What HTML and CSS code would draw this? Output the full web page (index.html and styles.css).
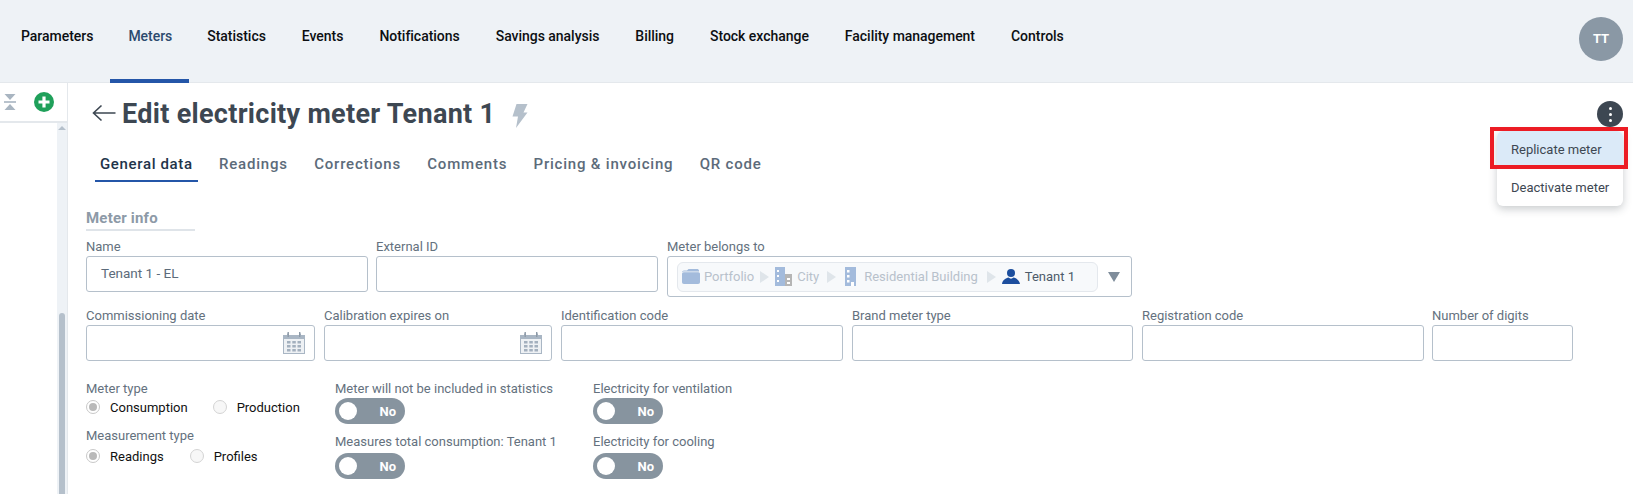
FILE: index.html
```html
<!DOCTYPE html>
<html lang="en">

<head>
    <meta charset="UTF-8">
    <meta name="viewport" content="width=device-width, initial-scale=1.0">
    <title>Edit electricity meter</title>
    <link rel="stylesheet" href="styles.css">
</head>

<body>

    <header class="topbar">
        <nav class="mainnav">
            <a href="#">Parameters</a>
            <a href="#" class="active">Meters</a>
            <a href="#">Statistics</a>
            <a href="#">Events</a>
            <a href="#">Notifications</a>
            <a href="#">Savings analysis</a>
            <a href="#">Billing</a>
            <a href="#">Stock exchange</a>
            <a href="#">Facility management</a>
            <a href="#">Controls</a>
        </nav>
        <div class="avatar">TT</div>
    </header>

    <div class="main">
        <aside class="sidebar">
            <div class="sidebar-head">
                <svg class="collapse-icon" width="12" height="16" viewBox="0 0 12 16">
                    <path d="M0.5 0H11.5L6 6Z" />
                    <rect x="0" y="7.2" width="12" height="1.6" />
                    <path d="M6 10L11.5 16H0.5Z" />
                </svg>
                <svg width="20" height="20" viewBox="0 0 20 20">
                    <circle cx="10" cy="10" r="10" fill="#1fa05a" />
                    <path d="M10 4.5V15.5M4.5 10H15.5" stroke="#fff" stroke-width="3.2" />
                </svg>
            </div>
            <div class="sidebar-body">
                <div class="scroll-track">
                    <span class="scroll-up"></span>
                    <span class="scroll-thumb"></span>
                </div>
            </div>
        </aside>

        <main class="content">
            <div class="page-head">
                <svg class="back" width="24" height="18" viewBox="0 0 24 18">
                    <path d="M23.5 9H1.5M9.5 1.5L1.5 9L9.5 16.5" fill="none" stroke="#3d4752" stroke-width="1.6" />
                </svg>
                <h1>Edit electricity meter Tenant 1</h1>
                <svg class="bolt" width="16" height="24" viewBox="0 0 16 24">
                    <path d="M4.5 0H15.5L11.5 8.5H15.5L4 24L6 12.5H0.5Z" fill="#b5c0cb" />
                </svg>
                <button class="more"><i></i><i></i><i></i></button>
            </div>

            <div class="tabs">
                <a href="#" class="active">General data</a>
                <a href="#">Readings</a>
                <a href="#">Corrections</a>
                <a href="#">Comments</a>
                <a href="#">Pricing &amp; invoicing</a>
                <a href="#">QR code</a>
            </div>

            <form class="form">
                <div class="section-title">Meter info</div>

                <div class="row row-first">
                    <div class="field w282">
                        <label>Name</label>
                        <div class="input">Tenant 1 - EL</div>
                    </div>
                    <div class="field w282">
                        <label>External ID</label>
                        <div class="input"></div>
                    </div>
                    <div class="field w465">
                        <label>Meter belongs to</label>
                        <div class="input tree-input">
                            <div class="crumbs">
                                <svg width="18" height="15" viewBox="0 0 18 15">
                                    <path d="M0 3.5C0 2.5 .7 1.5 2 1.5H5L6.5 0H15C16 0 17 .7 17 1.5V2.5H1.500C1 2.500 .5 3 0 3.500Z" fill="#a3bbdc" />
                                    <path d="M0 5C0 4 .7 3.3 1.700 3.300H16.300C17.300 3.300 18 4 18 5V13C18 14 17.300 15 16 15H2C.7 15 0 14 0 13Z" fill="#a3bbdc" />
                                </svg>
                                <span class="crumb portfolio">Portfolio</span>
                                <b class="sep"></b>
                                <svg width="17" height="19" viewBox="0 0 17 19">
                                    <rect x="0" y="0" width="10" height="19" fill="#a3bbdc" />
                                    <rect x="10" y="7" width="7" height="12" fill="#b5b5b5" />
                                    <path d="M2 3H4V5H2ZM2 8H4V10H2ZM2 13H4V15H2ZM12 11H15V13H12ZM12 15H15V17H12Z" fill="#fff" />
                                </svg>
                                <span class="crumb city">City</span>
                                <b class="sep sep-wide"></b>
                                <svg width="11" height="19" viewBox="0 0 11 19">
                                    <rect x="0" y="0" width="11" height="19" fill="#a3bbdc" />
                                    <path d="M2 3H4.500V5.500H2ZM2 8H4.500V10.500H2ZM2 13H4.500V15.500H2ZM6 15H9V19H6Z" fill="#fff" />
                                </svg>
                                <span class="crumb building">Residential Building</span>
                                <b class="sep"></b>
                                <svg width="18" height="15" viewBox="0 0 18 15">
                                    <circle cx="9" cy="4" r="4" fill="#1c4e9e" />
                                    <path d="M0 15C.5 11 4 9 6.500 8.500C8 10 10 10 11.500 8.500C14 9 17.500 11 18 15Z" fill="#1c4e9e" />
                                </svg>
                                <span class="crumb current">Tenant 1</span>
                            </div>
                            <span class="caret"></span>
                        </div>
                    </div>
                </div>

                <div class="row row-second">
                    <div class="field w229">
                        <label>Commissioning date</label>
                        <div class="input date-input">
                            <svg width="22" height="22" viewBox="0 0 22 22">
                                <use href="#cal" />
                            </svg>
                        </div>
                    </div>
                    <div class="field w228">
                        <label>Calibration expires on</label>
                        <div class="input date-input">
                            <svg width="22" height="22" viewBox="0 0 22 22">
                                <use href="#cal" />
                            </svg>
                        </div>
                    </div>
                    <div class="field w282">
                        <label>Identification code</label>
                        <div class="input"></div>
                    </div>
                    <div class="field w281">
                        <label>Brand meter type</label>
                        <div class="input"></div>
                    </div>
                    <div class="field w282">
                        <label>Registration code</label>
                        <div class="input"></div>
                    </div>
                    <div class="field w141">
                        <label>Number of digits</label>
                        <div class="input"></div>
                    </div>
                </div>

                <div class="options">
                    <div class="col col-radios">
                        <label>Meter type</label>
                        <div class="radios">
                            <span class="radio checked"></span><span class="radio-text consumption">Consumption</span>
                            <span class="radio"></span><span class="radio-text">Production</span>
                        </div>
                        <label class="next">Measurement type</label>
                        <div class="radios">
                            <span class="radio checked"></span><span class="radio-text">Readings</span>
                            <span class="radio"></span><span class="radio-text">Profiles</span>
                        </div>
                    </div>
                    <div class="col col-toggles">
                        <label>Meter will not be included in statistics</label>
                        <div class="toggle"><span class="knob"></span><span>No</span></div>
                        <label class="next">Measures total consumption: Tenant 1</label>
                        <div class="toggle lower"><span class="knob"></span><span>No</span></div>
                    </div>
                    <div class="col">
                        <label>Electricity for ventilation</label>
                        <div class="toggle"><span class="knob"></span><span>No</span></div>
                        <label class="next">Electricity for cooling</label>
                        <div class="toggle lower"><span class="knob"></span><span>No</span></div>
                    </div>
                </div>
            </form>

            <div class="menu">
                <a href="#" class="hover">Replicate meter</a>
                <a href="#">Deactivate meter</a>
            </div>
            <div class="highlight"></div>
        </main>
    </div>

    <svg class="defs" width="0" height="0">
        <symbol id="cal" viewBox="0 0 22 22">
            <path d="M0 3H4V1.500H6V3H16V1.500H18V3H22V22H0Z" fill="#a9b6c4" />
            <rect x="1" y="7" width="20" height="14" fill="#eef1f4" />
            <rect x="4.500" y="0" width="1.400" height="5" fill="#8d9aa7" />
            <rect x="16" y="0" width="1.400" height="5" fill="#8d9aa7" />
            <path d="M4 9H7.500V11.500H4ZM9.300 9H12.800V11.500H9.300ZM14.500 9H18V11.500H14.500ZM4 13H7.500V15.500H4ZM9.300 13H12.800V15.500H9.300ZM14.500 13H18V15.500H14.500ZM4 17H7.500V19.500H4ZM9.300 17H12.800V19.500H9.300ZM14.500 17H18V19.500H14.500Z" fill="#a3b0be" />
        </symbol>
    </svg>

</body>

</html>
```

FILE: styles.css
```css
* {
    box-sizing: border-box;
}

html,
body {
    height: 100%;
}

body {
    margin: 0;
    overflow: hidden;
    display: flex;
    flex-direction: column;
    font-family: Roboto, "Liberation Sans", sans-serif;
    font-size: 13px;
    color: #3d4752;
    background-color: #fff;
}

a {
    text-decoration: none;
}

.defs {
    position: absolute;
}

/* top bar */
.topbar {
    display: flex;
    flex: none;
    height: 83px;
    padding: 0 10px 0 3px;
    background-color: #eef2f6;
    border-bottom: 1px solid #e4e8ec;
}

.mainnav {
    display: flex;
}

.mainnav a {
    height: 83px;
    padding: 27px 18px 0;
    line-height: 18px;
    font-size: 14px;
    font-weight: 500;
    letter-spacing: -.03px;
    color: #0c0f12;
}

.mainnav a.active {
    margin-left: -1px;
    padding-right: 17px;
    color: #2c4a6e;
    border-bottom: 4px solid #2456a8;
}

.avatar {
    width: 44px;
    height: 44px;
    margin: 17px 0 0 auto;
    border-radius: 50%;
    background-color: #8a98a5;
    color: #fff;
    font-size: 13px;
    font-weight: 700;
    line-height: 44px;
    text-align: center;
}

.main {
    display: flex;
    flex: 1;
    min-height: 0;
}

/* sidebar */
.sidebar {
    display: flex;
    flex: none;
    flex-direction: column;
    width: 68px;
    border-right: 1px solid #e4e8ec;
}

.sidebar-head {
    display: flex;
    flex: none;
    align-items: center;
    height: 40px;
    padding-left: 4px;
    border-bottom: 2px solid #e4e8ec;
}

.collapse-icon {
    margin-right: 18px;
    fill: #a9b5c1;
}

.sidebar-body {
    display: flex;
    flex: 1;
    min-height: 0;
    justify-content: flex-end;
}

.scroll-track {
    display: flex;
    flex-direction: column;
    width: 10px;
    padding-top: 3px;
    background-color: #eef2f6;
}

.scroll-up {
    display: block;
    width: 0;
    margin-left: 1px;
    border-left: 4px solid transparent;
    border-right: 4px solid transparent;
    border-bottom: 4px solid #b5c0cb;
}

.scroll-thumb {
    display: block;
    flex: 1;
    width: 6px;
    margin: 183px 0 0 2px;
    border-radius: 3px 3px 0 0;
    background-color: #b5c0cb;
}

/* content */
.content {
    position: relative;
    flex: 1;
    min-width: 0;
}

.page-head {
    display: flex;
    align-items: center;
    height: 34px;
    margin-top: 13px;
    padding: 0 10px 0 24px;
}

.back {
    margin-right: 6px;
}

.page-head h1 {
    margin: 1px 0 0;
    font-size: 27px;
    font-weight: 700;
    letter-spacing: .3px;
    line-height: 34px;
    color: #3d4752;
}

.bolt {
    margin: 6px 0 0 17px;
}

.more {
    display: flex;
    flex-direction: column;
    align-items: center;
    justify-content: center;
    gap: 3px;
    width: 26px;
    height: 26px;
    margin: 2px 0 0 auto;
    padding: 0;
    border: 0;
    border-radius: 50%;
    background-color: #3d4752;
}

.more i {
    width: 3px;
    height: 3px;
    border-radius: 50%;
    background-color: #fff;
}

.tabs {
    display: flex;
    gap: 16.3px;
    height: 36px;
    margin: 16px 0 0 27px;
}

.tabs a {
    padding: 9px 5px 0;
    font-size: 15px;
    font-weight: 500;
    letter-spacing: .8px;
    line-height: 18px;
    color: #5c6b7a;
}

.tabs a.active {
    letter-spacing: .65px;
    color: #22344a;
    border-bottom: 2px solid #2456a8;
}

/* form */
.form {
    padding-left: 18px;
}

.section-title {
    width: 109px;
    height: 23px;
    margin-top: 26px;
    font-size: 15px;
    font-weight: 700;
    letter-spacing: .2px;
    line-height: 20px;
    color: #8d9aa7;
    border-bottom: 2px solid #dfe4e9;
}

label {
    display: block;
    height: 18px;
    line-height: 18px;
    font-size: 13px;
    color: #64717e;
    white-space: nowrap;
}

.row {
    display: flex;
}

.row-first {
    gap: 8px;
    height: 59px;
    margin-top: 7px;
}

.row-second {
    gap: 9px;
    margin-top: 10px;
}

.w141 {
    width: 141px;
    margin-left: -1px;
}

.w228 {
    width: 228px;
}

.w229 {
    width: 229px;
}

.w281 {
    width: 281px;
}

.w282 {
    width: 282px;
}

.w465 {
    width: 465px;
    margin-left: 1px;
}

.input {
    display: flex;
    align-items: center;
    height: 36px;
    padding: 0 0 2px 14px;
    border: 1px solid #b5c0cb;
    border-radius: 3px;
    background-color: #fff;
    font-size: 13.5px;
    color: #5c6b7a;
}

.tree-input {
    height: 41px;
    padding: 0 0 0 9px;
    font-size: 13px;
}

.crumbs {
    display: flex;
    align-items: center;
    width: 421px;
    height: 30px;
    padding-left: 4px;
    border: 1px solid #e4e8ed;
    border-radius: 6px;
    background-color: #f7f9fb;
}

.crumb {
    margin-left: 5px;
    color: #b8c1cb;
}

.crumb.portfolio {
    margin-left: 4px;
    margin-right: 6px;
}

.crumb.city {
    margin-right: 8px;
}

.crumb.building {
    margin-left: 8px;
    margin-right: 9px;
}

.crumb.current {
    color: #4d5b6a;
}

.sep {
    width: 0;
    margin-right: 6px;
    border-left: 9px solid #dfe5ea;
    border-top: 6.5px solid transparent;
    border-bottom: 6.5px solid transparent;
}

.sep-wide {
    margin-right: 9px;
}

.caret {
    width: 0;
    margin-left: 10px;
    border-top: 10px solid #7f8d9b;
    border-left: 6px solid transparent;
    border-right: 6px solid transparent;
}

.date-input {
    justify-content: flex-end;
    padding: 0 9px 0 0;
}

/* radios and toggles */
.options {
    display: flex;
    margin-top: 19px;
}

.col-radios {
    width: 249px;
}

.col-toggles {
    width: 258px;
}

.next {
    margin-top: 9px;
}

.col-radios .next {
    margin-top: 11px;
}

.radios {
    display: flex;
    align-items: center;
    height: 18px;
}

.col-radios .next + .radios {
    margin-top: 2px;
}

.radio {
    position: relative;
    flex: none;
    width: 14px;
    height: 14px;
    margin-right: 10px;
    border: 1px solid #d4d4d4;
    border-radius: 50%;
    background-color: #f7f7f7;
}

.radio.checked {
    border-color: #c8c8c8;
    background-color: #fff;
}

.radio.checked::after {
    content: "";
    position: absolute;
    inset: 2px;
    border-radius: 50%;
    background-color: #b9b9b9;
}

.radio-text {
    margin-right: 26px;
    color: #111;
}

.radio-text.consumption {
    margin-right: 25px;
}

.toggle {
    display: flex;
    align-items: center;
    justify-content: space-between;
    width: 70px;
    height: 26px;
    padding: 0 9px 0 4px;
    border-radius: 13px;
    background-color: #87949f;
    color: #fff;
    font-weight: 700;
}

.toggle.lower {
    margin-top: 2px;
}

.knob {
    width: 18px;
    height: 18px;
    border-radius: 50%;
    background-color: #fff;
}

/* popup menu */
.menu {
    position: absolute;
    top: 48px;
    right: 10px;
    width: 126px;
    height: 75px;
    border-radius: 6px;
    overflow: hidden;
    background-color: #fff;
    box-shadow: 0 3px 8px rgba(40, 50, 60, .25);
}

.menu a {
    display: block;
    height: 37.5px;
    padding-left: 14px;
    line-height: 37px;
    font-size: 13px;
    color: #3d4752;
}

.menu a.hover {
    background-color: #dbeaf8;
}

.highlight {
    position: absolute;
    top: 44px;
    right: 5px;
    width: 138px;
    height: 42px;
    border: 4px solid #ec1c24;
}
```
